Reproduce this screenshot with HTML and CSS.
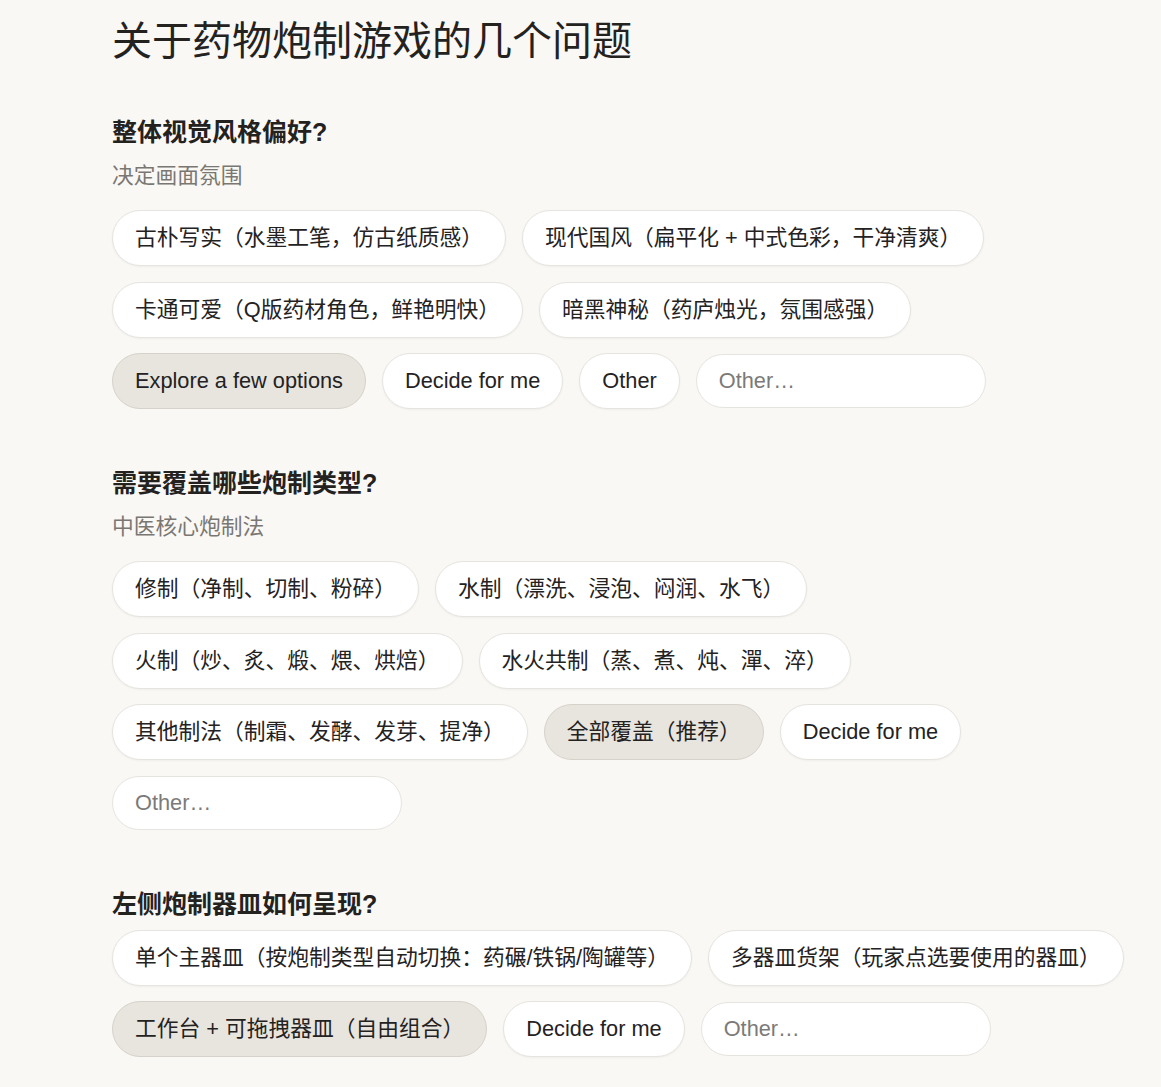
FILE: index.html
```html
<!DOCTYPE html>
<html lang="zh-CN">
<head>
<meta charset="utf-8">
<title>关于药物炮制游戏的几个问题</title>
<link rel="stylesheet" href="styles.css">
</head>
<body>
<main class="page">
  <h1 class="title">关于药物炮制游戏的几个问题</h1>

  <section class="question">
    <h2 class="q-title">整体视觉风格偏好?</h2>
    <p class="q-sub">决定画面氛围</p>
    <div class="options">
      <button class="chip">古朴写实（水墨工笔，仿古纸质感）</button>
      <button class="chip">现代国风（扁平化 + 中式色彩，干净清爽）</button>
      <button class="chip">卡通可爱（Q版药材角色，鲜艳明快）</button>
      <button class="chip">暗黑神秘（药庐烛光，氛围感强）</button>
      <button class="chip selected">Explore a few options</button>
      <button class="chip">Decide for me</button>
      <button class="chip">Other</button>
      <input class="other-input" type="text" placeholder="Other…">
    </div>
  </section>

  <section class="question">
    <h2 class="q-title">需要覆盖哪些炮制类型?</h2>
    <p class="q-sub">中医核心炮制法</p>
    <div class="options">
      <button class="chip">修制（净制、切制、粉碎）</button>
      <button class="chip">水制（漂洗、浸泡、闷润、水飞）</button>
      <button class="chip">火制（炒、炙、煅、煨、烘焙）</button>
      <button class="chip">水火共制（蒸、煮、炖、潬、淬）</button>
      <button class="chip">其他制法（制霜、发酵、发芽、提净）</button>
      <button class="chip selected">全部覆盖（推荐）</button>
      <button class="chip">Decide for me</button>
      <input class="other-input" type="text" placeholder="Other…">
    </div>
  </section>

  <section class="question">
    <h2 class="q-title">左侧炮制器皿如何呈现?</h2>
    <div class="options options-tight">
      <button class="chip">单个主器皿（按炮制类型自动切换：药碾/铁锅/陶罐等）</button>
      <button class="chip">多器皿货架（玩家点选要使用的器皿）</button>
      <button class="chip selected">工作台 + 可拖拽器皿（自由组合）</button>
      <button class="chip">Decide for me</button>
      <input class="other-input" type="text" placeholder="Other…">
    </div>
  </section>
</main>
</body>
</html>
```

FILE: styles.css
```css
html, body {
  margin: 0;
  padding: 0;
  background: #f9f8f5;
}

body {
  font-family: "Liberation Sans", "Noto Sans CJK SC", sans-serif;
  color: #24221f;
}

.page {
  padding: 17px 24px 40px 112px;
}

.title {
  margin: 0;
  font-size: 40px;
  line-height: 48px;
  font-weight: 400;
  color: #24221f;
}

.question {
  margin-top: 58px;
}

.question:first-of-type {
  margin-top: 51px;
}

.q-title {
  margin: 0;
  font-size: 25px;
  line-height: 32px;
  font-weight: 700;
  color: #24221f;
}

.q-sub {
  margin: 12px 0 0 0;
  font-size: 21.75px;
  line-height: 32px;
  color: #7a7772;
}

.options {
  margin-top: 18px;
  display: flex;
  flex-wrap: wrap;
  align-items: center;
  gap: 15.5px 16px;
}

.options-tight {
  margin-top: 10px;
}

.chip {
  font-family: "Liberation Sans", "Noto Sans CJK SC", sans-serif;
  font-size: 21.75px;
  line-height: 30px;
  color: #24221f;
  background: #ffffff;
  border: 1px solid #e6e4df;
  border-radius: 999px;
  padding: 12px 22px;
  margin: 0;
  box-shadow: 0 1px 2px rgba(60, 50, 30, 0.05);
  cursor: pointer;
  white-space: nowrap;
}

.chip.selected {
  background: #e8e5de;
  border-color: #d6d2c9;
  box-shadow: none;
}

.other-input {
  box-sizing: border-box;
  width: 290px;
  height: 54px;
  font-family: "Liberation Sans", "Noto Sans CJK SC", sans-serif;
  font-size: 21.75px;
  color: #24221f;
  background: #ffffff;
  border: 1px solid #e6e4df;
  border-radius: 999px;
  padding: 0 22px;
  margin: 0;
  outline: none;
}

.other-input::placeholder {
  color: #7b7a78;
}
```
